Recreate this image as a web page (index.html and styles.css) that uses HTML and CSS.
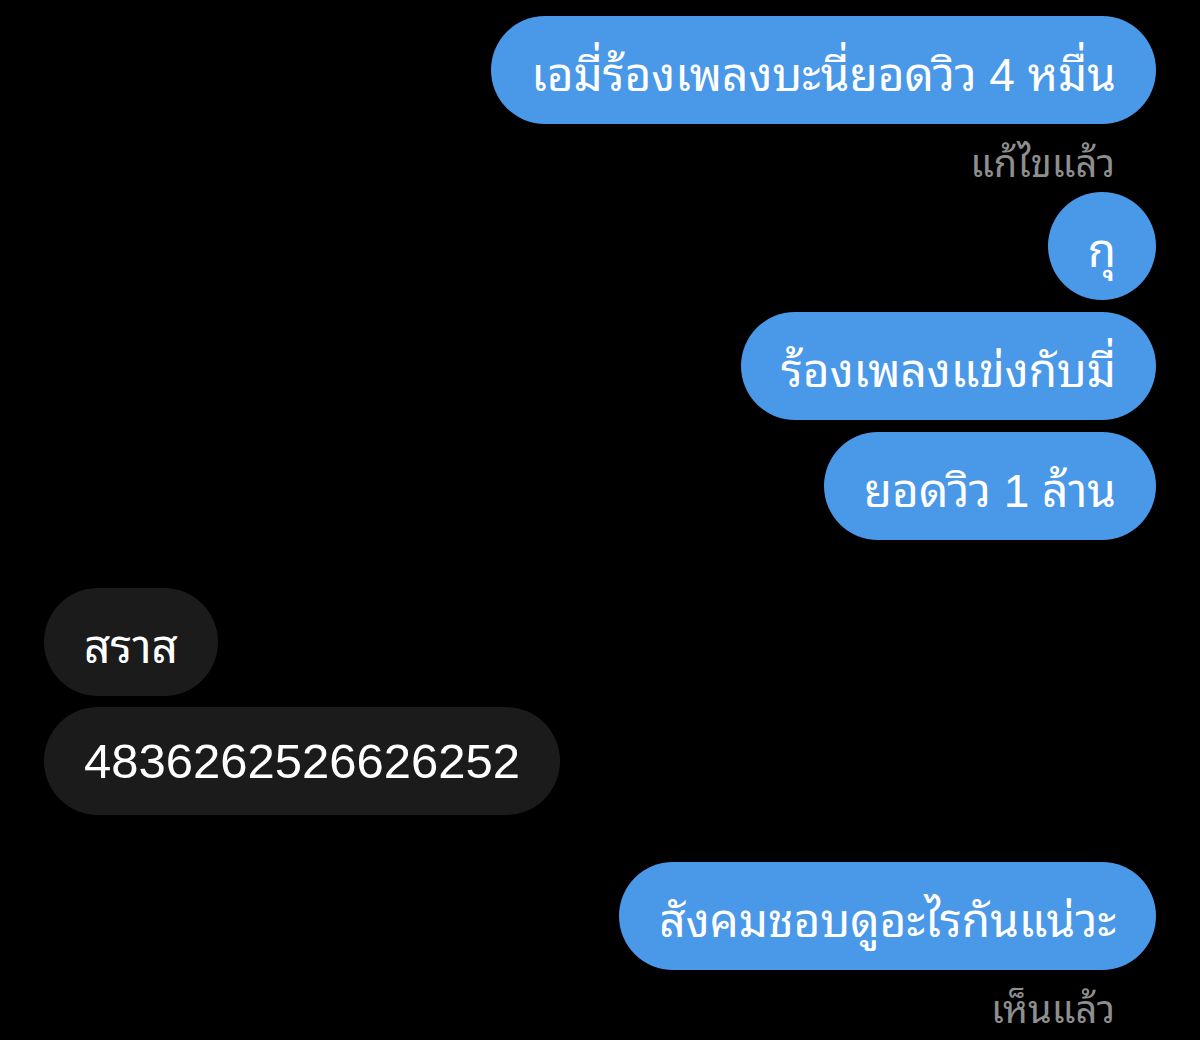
FILE: index.html
```html
<!DOCTYPE html>
<html lang="th">
<head>
<meta charset="utf-8">
<link rel="stylesheet" href="styles.css">
</head>
<body>
<main class="chat">
  <div class="group out">
    <div class="bubble blue">เอมี่ร้องเพลงบะนี่ยอดวิว 4 หมื่น</div>
    <div class="meta">แก้ไขแล้ว</div>
  </div>
  <div class="group out">
    <div class="bubble blue round">กุ</div>
    <div class="bubble blue">ร้องเพลงแข่งกับมี่</div>
    <div class="bubble blue">ยอดวิว 1 ล้าน</div>
  </div>
  <div class="group in">
    <div class="bubble gray">สราส</div>
    <div class="bubble gray num">4836262526626252</div>
  </div>
  <div class="group out">
    <div class="bubble blue">สังคมชอบดูอะไรกันแน่วะ</div>
    <div class="meta">เห็นแล้ว</div>
  </div>
</main>
</body>
</html>
```
FILE: styles.css
```css
html, body {
  margin: 0;
  padding: 0;
  background: #000;
}
body {
  width: 1200px;
  height: 1040px;
  overflow: hidden;
  font-family: "Liberation Sans", "Noto Sans Thai Looped", "Loma", "Garuda", "Waree", "Noto Sans Thai", "Noto Sans", sans-serif;
  color: #fff;
}
.chat {
  display: flex;
  flex-direction: column;
  padding: 16px 44px 0;
}
.group {
  display: flex;
  flex-direction: column;
  gap: 12px;
}
.group.out { align-items: flex-end; }
.group.in { align-items: flex-start; margin-top: 48px; gap: 11px; }
.group.in + .group.out { margin-top: 47px; }
.bubble {
  height: 108px;
  box-sizing: border-box;
  padding: 0 40px;
  border-radius: 54px;
  display: flex;
  align-items: center;
  font-size: 46px;
  white-space: nowrap;
}
.bubble.blue { background: #4a98e8; }
.bubble.gray { background: #1b1b1b; }
.bubble.num { font-size: 49px; }
.bubble.round {
  width: 108px;
  padding: 0;
  justify-content: center;
}
.meta {
  color: #8e8e8e;
  font-size: 38px;
  margin-right: 41px;
  line-height: 56px;
}
```
